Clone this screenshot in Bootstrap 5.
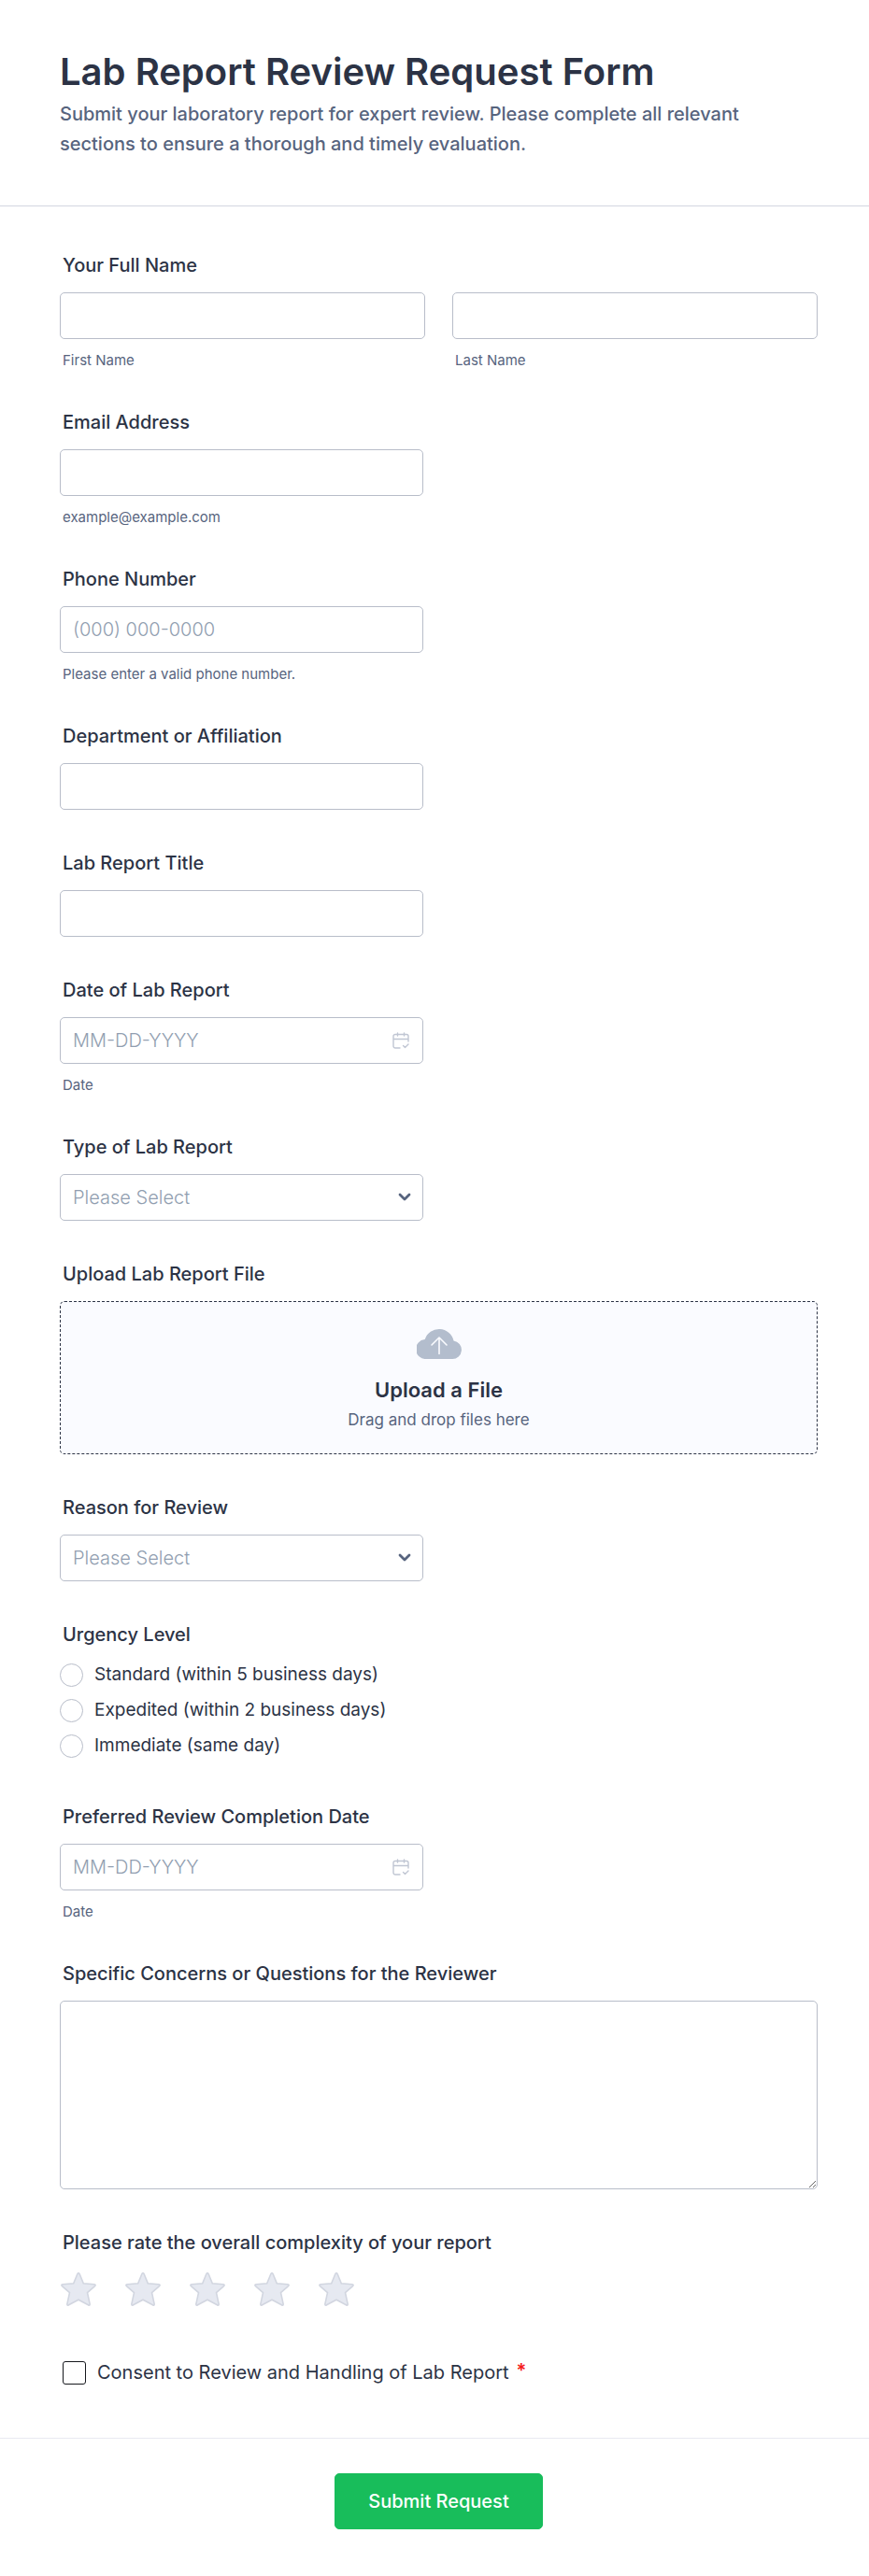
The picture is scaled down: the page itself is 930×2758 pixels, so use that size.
<!DOCTYPE html>
<html lang="en">
<head>
<meta charset="utf-8">
<meta name="viewport" content="width=device-width, initial-scale=1">
<title>Lab Report Review Request Form</title>
<link rel="stylesheet" href="https://cdn.jsdelivr.net/npm/bootstrap@5.3.0/dist/css/bootstrap.min.css">
<style>
  :root { --ink: #2c3345; --muted: #57647e; --line: #b8bdc9; --ghost: #919eb0; }
  body { font-family: Inter, "Liberation Sans", sans-serif; color: var(--ink); background: #fff; }
  .gutters { padding-left: 64px; padding-right: 55px; }
  .form-head { padding-top: 52px; padding-bottom: 50px; border-bottom: 1px solid #d3d6e0; }
  .form-head h1 { font-size: 40px; line-height: 50px; font-weight: 600; margin: 0; }
  .form-head p { font-size: 20px; line-height: 32px; font-weight: 500; color: var(--muted); margin: 4px 0 0; max-width: 760px; }
  .questions { padding-top: 51px; padding-bottom: 57px; }
  .question { margin-bottom: 45px; }
  .question-label { display: block; font-size: 20px; line-height: 24px; font-weight: 500; padding-left: 3px; margin: 0 0 17px; float: none; width: auto; }
  .half { width: 48%; max-width: 100%; }
  .name-row { --bs-gutter-x: 29px; }
  .form-control, .form-select { height: 50px; border: 1px solid var(--line); border-radius: 5px; padding: 0 13px; font-size: 20px; line-height: 24px; color: var(--ink); box-shadow: none; font-weight: 300; }
  .form-control::placeholder { color: var(--ghost); opacity: 1; }
  .form-select { color: var(--ghost); background-image: url("data:image/svg+xml,%3Csvg xmlns='http://www.w3.org/2000/svg' viewBox='0 0 14 10'%3E%3Cpath d='M2 2l5 5 5-5' fill='none' stroke='%2357647e' stroke-width='2.8' stroke-linecap='round' stroke-linejoin='round'/%3E%3C/svg%3E"); background-size: 14px 10px; background-position: right 12px center; }
  textarea.form-control { height: 202px; padding: 12px 13px; display: block; }
  .hint { display: block; font-size: 15px; line-height: 18px; color: var(--muted); padding-left: 3px; margin-top: 14px; }
  .date-icon { position: absolute; right: 15px; top: 16px; pointer-events: none; }
  .dropzone { min-height: 164px; border: 1px dashed var(--ink); border-radius: 5px; background: #fafbff; cursor: pointer; padding-top: 28px; }
  .dropzone strong { font-size: 22px; line-height: 28px; font-weight: 600; margin-top: 19px; }
  .dropzone span { font-size: 17px; line-height: 24px; color: var(--muted); margin-top: 6px; }
  .choices { margin-top: -5px; margin-bottom: 0; }
  .choice { height: 38px; padding: 0; margin: 0; }
  .choice .form-check-input { width: 25px; height: 25px; margin: 0 12px 0 0; float: none; flex: none; border: 1px solid var(--line); }
  .choice label { font-size: 19px; line-height: 24px; }
  .stars { gap: 31px; margin-top: 2px; padding-left: 1px; }
  .stars label { line-height: 0; cursor: pointer; }
  .consent { margin-top: 58px; padding-left: 3px; }
  .consent .form-check-input { width: 25px; height: 25px; margin: 0 12px 0 0; float: none; flex: none; border: 1px solid #16181d; border-radius: 3px; }
  .consent label { font-size: 20px; line-height: 26px; }
  .required { color: #f51a1a; font-weight: 600; margin-left: 8px; font-size: 20px; line-height: 22px; align-self: flex-start; }
  .form-foot { border-top: 1px solid #e8e9f1; padding-top: 37px; padding-bottom: 49px; }
  .btn-send { --bs-btn-color: #fff; --bs-btn-bg: #18bd5b; --bs-btn-border-color: #18bd5b; --bs-btn-hover-color: #fff; --bs-btn-hover-bg: #16aa52; --bs-btn-hover-border-color: #16aa52; --bs-btn-font-size: 20px; --bs-btn-line-height: 24px; --bs-btn-font-weight: 500; --bs-btn-border-radius: 5px; --bs-btn-padding-x: 35px; --bs-btn-padding-y: 17px; }
</style>
</head>
<body>
<svg class="d-none" xmlns="http://www.w3.org/2000/svg">
  <symbol id="calendar" viewBox="0 0 18 18"><g fill="none" stroke="#c0c6d3" stroke-width="1.4" stroke-linecap="round" stroke-linejoin="round"><path d="M8 17H3a2 2 0 0 1-2-2V4.500a2 2 0 0 1 2-2h12a2 2 0 0 1 2 2V10M1 7.500h16M5.500 1v3M12.500 1v3M11.500 14.500l2 2 3.500-3.500"/></g></symbol>
  <symbol id="star" viewBox="0 0 38 37"><path d="M19 1.500 Q19.700 1.500 20.200 2.800L24.300 12.800 36 13.800Q38 14.200 36.500 15.600L28.500 22.600 31.200 35Q31.200 36.800 29.400 35.700L19 30.200 8.600 35.700Q6.800 36.800 6.800 35L9.500 22.600 1.500 15.600Q0 14.200 2 13.800L13.700 12.800 17.800 2.800Q18.300 1.500 19 1.500Z" fill="#e6e9f1" stroke="#d2d6e0" stroke-width="1.600"/></symbol>
</svg>
<form>
  <header class="form-head gutters">
    <h1>Lab Report Review Request Form</h1>
    <p>Submit your laboratory report for expert review. Please complete all relevant sections to ensure a thorough and timely evaluation.</p>
  </header>

  <main class="questions gutters">
    <fieldset class="question">
      <legend class="question-label">Your Full Name</legend>
      <div class="row name-row">
        <div class="col-6"><input class="form-control" type="text" id="first"><label class="hint" for="first">First Name</label></div>
        <div class="col-6"><input class="form-control" type="text" id="last"><label class="hint" for="last">Last Name</label></div>
      </div>
    </fieldset>

    <div class="question">
      <label class="question-label" for="email">Email Address</label>
      <input class="form-control half" type="email" id="email" aria-describedby="email-hint">
      <span class="hint" id="email-hint">example@example.com</span>
    </div>

    <div class="question">
      <label class="question-label" for="phone">Phone Number</label>
      <input class="form-control half" type="tel" id="phone" placeholder="(000) 000-0000" aria-describedby="phone-hint">
      <span class="hint" id="phone-hint">Please enter a valid phone number.</span>
    </div>

    <div class="question">
      <label class="question-label" for="dept">Department or Affiliation</label>
      <input class="form-control half" type="text" id="dept">
    </div>

    <div class="question">
      <label class="question-label" for="report-title">Lab Report Title</label>
      <input class="form-control half" type="text" id="report-title">
    </div>

    <div class="question">
      <label class="question-label" for="report-date">Date of Lab Report</label>
      <div class="position-relative half">
        <input class="form-control" type="text" id="report-date" placeholder="MM-DD-YYYY" aria-describedby="report-date-hint">
        <svg class="date-icon" width="18" height="18" aria-hidden="true"><use href="#calendar"/></svg>
      </div>
      <span class="hint" id="report-date-hint">Date</span>
    </div>

    <div class="question">
      <label class="question-label" for="report-type">Type of Lab Report</label>
      <select class="form-select half" id="report-type"><option>Please Select</option></select>
    </div>

    <div class="question">
      <label class="question-label" for="file">Upload Lab Report File</label>
      <label class="dropzone d-flex flex-column align-items-center" for="file">
        <svg width="48" height="33" viewBox="0 0 48 33" aria-hidden="true">
          <path d="M10.500 33A10.500 10.500 0 0 1 8.700 12A16 16 0 0 1 39.500 13.500A9.800 9.800 0 0 1 38 33Z" fill="#b3bdcd"/>
          <path d="M24 27.500V10M16 18l8-8 8 8" fill="none" stroke="#fafbff" stroke-width="1.600" stroke-linecap="round" stroke-linejoin="round"/>
        </svg>
        <strong>Upload a File</strong>
        <span>Drag and drop files here</span>
      </label>
      <input class="visually-hidden" type="file" id="file">
    </div>

    <div class="question">
      <label class="question-label" for="reason">Reason for Review</label>
      <select class="form-select half" id="reason"><option>Please Select</option></select>
    </div>

    <fieldset class="question">
      <legend class="question-label">Urgency Level</legend>
      <div class="choices">
        <div class="form-check choice d-flex align-items-center"><input class="form-check-input" type="radio" name="urgency" id="standard"><label for="standard">Standard (within 5 business days)</label></div>
        <div class="form-check choice d-flex align-items-center"><input class="form-check-input" type="radio" name="urgency" id="expedited"><label for="expedited">Expedited (within 2 business days)</label></div>
        <div class="form-check choice d-flex align-items-center"><input class="form-check-input" type="radio" name="urgency" id="immediate"><label for="immediate">Immediate (same day)</label></div>
      </div>
    </fieldset>

    <div class="question">
      <label class="question-label" for="due-date">Preferred Review Completion Date</label>
      <div class="position-relative half">
        <input class="form-control" type="text" id="due-date" placeholder="MM-DD-YYYY" aria-describedby="due-date-hint">
        <svg class="date-icon" width="18" height="18" aria-hidden="true"><use href="#calendar"/></svg>
      </div>
      <span class="hint" id="due-date-hint">Date</span>
    </div>

    <div class="question">
      <label class="question-label" for="concerns">Specific Concerns or Questions for the Reviewer</label>
      <textarea class="form-control" id="concerns"></textarea>
    </div>

    <fieldset>
      <legend class="question-label">Please rate the overall complexity of your report</legend>
      <div class="stars d-flex">
        <label for="rate1"><input class="visually-hidden" type="radio" name="rate" id="rate1" aria-label="1 star"><svg width="38" height="37"><use href="#star"/></svg></label>
        <label for="rate2"><input class="visually-hidden" type="radio" name="rate" id="rate2" aria-label="2 stars"><svg width="38" height="37"><use href="#star"/></svg></label>
        <label for="rate3"><input class="visually-hidden" type="radio" name="rate" id="rate3" aria-label="3 stars"><svg width="38" height="37"><use href="#star"/></svg></label>
        <label for="rate4"><input class="visually-hidden" type="radio" name="rate" id="rate4" aria-label="4 stars"><svg width="38" height="37"><use href="#star"/></svg></label>
        <label for="rate5"><input class="visually-hidden" type="radio" name="rate" id="rate5" aria-label="5 stars"><svg width="38" height="37"><use href="#star"/></svg></label>
      </div>
    </fieldset>

    <div class="consent d-flex align-items-center">
      <input class="form-check-input" type="checkbox" id="consent" required>
      <label for="consent">Consent to Review and Handling of Lab Report</label><span class="required">*</span>
    </div>
  </main>

  <footer class="form-foot gutters text-center">
    <button class="btn btn-send" type="submit">Submit Request</button>
  </footer>
</form>
<script src="https://cdn.jsdelivr.net/npm/bootstrap@5.3.0/dist/js/bootstrap.bundle.min.js"></script>
</body>
</html>
